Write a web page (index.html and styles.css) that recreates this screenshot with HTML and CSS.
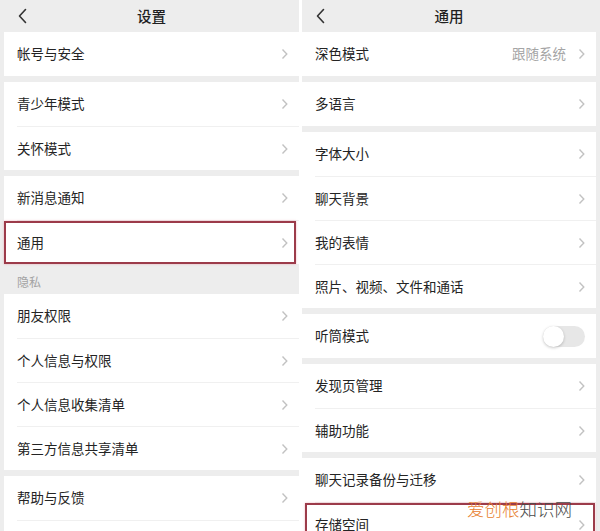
FILE: index.html
```html
<!DOCTYPE html>
<html lang="zh-CN">
<head>
<meta charset="utf-8">
<title>设置 / 通用</title>
<link rel="stylesheet" href="styles.css">
</head>
<body>
<div class="screen">
  <section class="panel panel-left">
    <header class="nav">
      <span class="back"><svg width="9" height="16" viewBox="0 0 9 16"><path d="M7.5 1.5 L1.5 8 L7.5 14.5" fill="none" stroke="#333" stroke-width="1.6" stroke-linecap="round" stroke-linejoin="round"/></svg></span>
      <h1 class="title">设置</h1>
      <span></span>
    </header>
    <div class="group">
      <div class="row"><div class="row-inner"><span class="label">帐号与安全</span><svg class="chev" width="7" height="12" viewBox="0 0 7 12"><path d="M1.5 1.5 L5.8 6 L1.5 10.5" fill="none" stroke="#c2c2c2" stroke-width="1.4"/></svg></div></div>
    </div>
    <div class="group">
      <div class="row"><div class="row-inner"><span class="label">青少年模式</span><svg class="chev" width="7" height="12" viewBox="0 0 7 12"><path d="M1.5 1.5 L5.8 6 L1.5 10.5" fill="none" stroke="#c2c2c2" stroke-width="1.4"/></svg></div></div>
      <div class="row"><div class="row-inner"><span class="label">关怀模式</span><svg class="chev" width="7" height="12" viewBox="0 0 7 12"><path d="M1.5 1.5 L5.8 6 L1.5 10.5" fill="none" stroke="#c2c2c2" stroke-width="1.4"/></svg></div></div>
    </div>
    <div class="group group-flush">
      <div class="row"><div class="row-inner"><span class="label">新消息通知</span><svg class="chev" width="7" height="12" viewBox="0 0 7 12"><path d="M1.5 1.5 L5.8 6 L1.5 10.5" fill="none" stroke="#c2c2c2" stroke-width="1.4"/></svg></div></div>
      <div class="row highlight highlight-left"><div class="row-inner"><span class="label">通用</span><svg class="chev" width="7" height="12" viewBox="0 0 7 12"><path d="M1.5 1.5 L5.8 6 L1.5 10.5" fill="none" stroke="#c2c2c2" stroke-width="1.4"/></svg></div></div>
    </div>
    <div class="section-label">隐私</div>
    <div class="group">
      <div class="row"><div class="row-inner"><span class="label">朋友权限</span><svg class="chev" width="7" height="12" viewBox="0 0 7 12"><path d="M1.5 1.5 L5.8 6 L1.5 10.5" fill="none" stroke="#c2c2c2" stroke-width="1.4"/></svg></div></div>
      <div class="row"><div class="row-inner"><span class="label">个人信息与权限</span><svg class="chev" width="7" height="12" viewBox="0 0 7 12"><path d="M1.5 1.5 L5.8 6 L1.5 10.5" fill="none" stroke="#c2c2c2" stroke-width="1.4"/></svg></div></div>
      <div class="row"><div class="row-inner"><span class="label">个人信息收集清单</span><svg class="chev" width="7" height="12" viewBox="0 0 7 12"><path d="M1.5 1.5 L5.8 6 L1.5 10.5" fill="none" stroke="#c2c2c2" stroke-width="1.4"/></svg></div></div>
      <div class="row"><div class="row-inner"><span class="label">第三方信息共享清单</span><svg class="chev" width="7" height="12" viewBox="0 0 7 12"><path d="M1.5 1.5 L5.8 6 L1.5 10.5" fill="none" stroke="#c2c2c2" stroke-width="1.4"/></svg></div></div>
    </div>
    <div class="group">
      <div class="row"><div class="row-inner"><span class="label">帮助与反馈</span><svg class="chev" width="7" height="12" viewBox="0 0 7 12"><path d="M1.5 1.5 L5.8 6 L1.5 10.5" fill="none" stroke="#c2c2c2" stroke-width="1.4"/></svg></div></div>
      <div class="row"><div class="row-inner"></div></div>
    </div>
  </section>

  <section class="panel panel-right">
    <header class="nav">
      <span class="back"><svg width="9" height="16" viewBox="0 0 9 16"><path d="M7.5 1.5 L1.5 8 L7.5 14.5" fill="none" stroke="#333" stroke-width="1.6" stroke-linecap="round" stroke-linejoin="round"/></svg></span>
      <h1 class="title">通用</h1>
      <span></span>
    </header>
    <div class="group">
      <div class="row"><div class="row-inner"><span class="label">深色模式</span><span class="value">跟随系统</span><svg class="chev" width="7" height="12" viewBox="0 0 7 12"><path d="M1.5 1.5 L5.8 6 L1.5 10.5" fill="none" stroke="#c2c2c2" stroke-width="1.4"/></svg></div></div>
    </div>
    <div class="group">
      <div class="row"><div class="row-inner"><span class="label">多语言</span><svg class="chev" width="7" height="12" viewBox="0 0 7 12"><path d="M1.5 1.5 L5.8 6 L1.5 10.5" fill="none" stroke="#c2c2c2" stroke-width="1.4"/></svg></div></div>
    </div>
    <div class="group">
      <div class="row"><div class="row-inner"><span class="label">字体大小</span><svg class="chev" width="7" height="12" viewBox="0 0 7 12"><path d="M1.5 1.5 L5.8 6 L1.5 10.5" fill="none" stroke="#c2c2c2" stroke-width="1.4"/></svg></div></div>
      <div class="row"><div class="row-inner"><span class="label">聊天背景</span><svg class="chev" width="7" height="12" viewBox="0 0 7 12"><path d="M1.5 1.5 L5.8 6 L1.5 10.5" fill="none" stroke="#c2c2c2" stroke-width="1.4"/></svg></div></div>
      <div class="row"><div class="row-inner"><span class="label">我的表情</span><svg class="chev" width="7" height="12" viewBox="0 0 7 12"><path d="M1.5 1.5 L5.8 6 L1.5 10.5" fill="none" stroke="#c2c2c2" stroke-width="1.4"/></svg></div></div>
      <div class="row"><div class="row-inner"><span class="label">照片、视频、文件和通话</span><svg class="chev" width="7" height="12" viewBox="0 0 7 12"><path d="M1.5 1.5 L5.8 6 L1.5 10.5" fill="none" stroke="#c2c2c2" stroke-width="1.4"/></svg></div></div>
    </div>
    <div class="group">
      <div class="row"><div class="row-inner"><span class="label">听筒模式</span><span class="toggle"><span class="knob"></span></span></div></div>
    </div>
    <div class="group">
      <div class="row"><div class="row-inner"><span class="label">发现页管理</span><svg class="chev" width="7" height="12" viewBox="0 0 7 12"><path d="M1.5 1.5 L5.8 6 L1.5 10.5" fill="none" stroke="#c2c2c2" stroke-width="1.4"/></svg></div></div>
      <div class="row"><div class="row-inner"><span class="label">辅助功能</span><svg class="chev" width="7" height="12" viewBox="0 0 7 12"><path d="M1.5 1.5 L5.8 6 L1.5 10.5" fill="none" stroke="#c2c2c2" stroke-width="1.4"/></svg></div></div>
    </div>
    <div class="group">
      <div class="row"><div class="row-inner"><span class="label">聊天记录备份与迁移</span><svg class="chev" width="7" height="12" viewBox="0 0 7 12"><path d="M1.5 1.5 L5.8 6 L1.5 10.5" fill="none" stroke="#c2c2c2" stroke-width="1.4"/></svg></div></div>
      <div class="row highlight highlight-right"><div class="row-inner"><span class="label">存储空间</span><svg class="chev" width="7" height="12" viewBox="0 0 7 12"><path d="M1.5 1.5 L5.8 6 L1.5 10.5" fill="none" stroke="#c2c2c2" stroke-width="1.4"/></svg></div></div>
    </div>
  </section>

  <div class="watermark"><span class="wm-accent">爱创根</span><span class="wm-plain">知识网</span></div>
</div>
</body>
</html>
```

FILE: styles.css
```css
* { box-sizing: border-box; }

html, body {
  margin: 0;
  padding: 0;
}

body {
  width: 600px;
  height: 531px;
  overflow: hidden;
  background: #ffffff;
  font-family: "Noto Sans CJK SC", "Noto Sans", sans-serif;
  color: #262626;
}

.screen {
  position: relative;
  display: flex;
  gap: 3px;
  height: 531px;
  overflow: hidden;
}

.panel {
  background: #ededed;
  height: 531px;
  overflow: hidden;
}

.panel-left {
  width: 299px;
  padding-left: 4px;
}

.panel-right {
  width: 298px;
  padding-right: 4px;
}

.nav {
  height: 32px;
  display: grid;
  grid-template-columns: 1fr auto 1fr;
  align-items: center;
  background: #ededed;
}

.back {
  display: flex;
  align-items: center;
  padding-left: 14px;
  height: 16px;
}

.title {
  margin: 0;
  font-size: 14.5px;
  font-weight: 500;
  color: #1f1f1f;
  line-height: 1;
}

.group {
  background: #ffffff;
  margin-bottom: 6px;
}

.group-flush {
  margin-bottom: 0;
}

.row {
  padding-left: 13px;
}

.row-inner {
  height: 44px;
  display: flex;
  align-items: center;
  padding-right: 11px;
  border-top: 1px solid #f0f0f0;
}

.row:first-child .row-inner {
  border-top: none;
}

.label {
  flex: 1;
  font-size: 13.5px;
  line-height: 1;
  color: #242424;
  white-space: nowrap;
}

.value {
  font-size: 13.5px;
  line-height: 1;
  color: #a5a5a5;
  margin-right: 12px;
}

.chev {
  display: block;
  flex: none;
}

.section-label {
  height: 30px;
  display: flex;
  align-items: flex-end;
  padding: 0 0 6px 13px;
  font-size: 12px;
  line-height: 1;
  color: #a3a3a3;
}

.toggle {
  width: 42px;
  height: 21px;
  border-radius: 11px;
  background: #e7e7e7;
  display: flex;
  align-items: center;
  flex: none;
}

.knob {
  width: 21px;
  height: 21px;
  border-radius: 50%;
  background: #ffffff;
  box-shadow: 0 1px 3px rgba(0, 0, 0, 0.22);
}

.highlight {
  position: relative;
}

.highlight::after {
  content: "";
  position: absolute;
  top: 1px;
  bottom: 0;
  border: 2px solid #9c3b4a;
  box-shadow: 0 0 2px rgba(230, 120, 140, 0.55);
  pointer-events: none;
}

.highlight-left::after {
  left: 0;
  right: 3px;
}

.highlight-right::after {
  left: 3px;
  right: 1px;
  bottom: -20px;
}

.watermark {
  position: absolute;
  left: 467px;
  top: 500px;
  font-size: 17.5px;
  line-height: 1;
  font-weight: 300;
  white-space: nowrap;
}

.wm-accent {
  color: #e8812f;
}

.wm-plain {
  color: #4a4a4a;
}
```
